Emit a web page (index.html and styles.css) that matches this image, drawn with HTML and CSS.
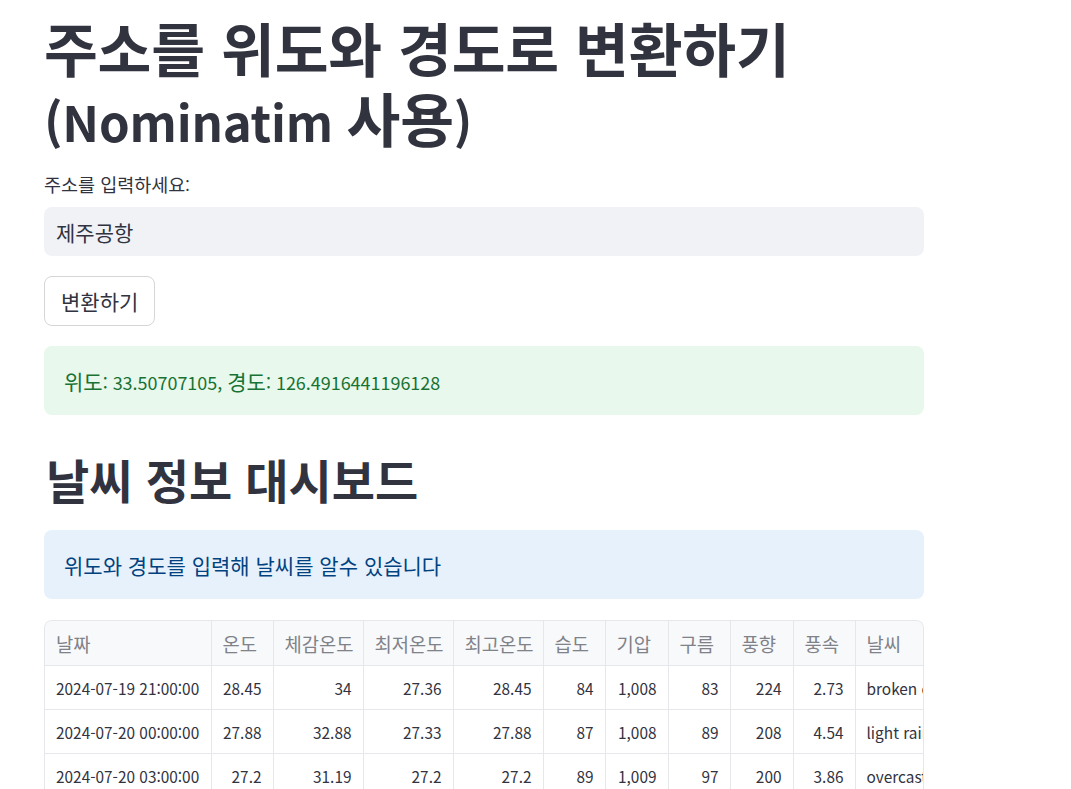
FILE: index.html
```html
<!DOCTYPE html>
<html lang="ko">
<head>
<meta charset="utf-8">
<title>주소를 위도와 경도로 변환하기</title>
<link rel="stylesheet" href="styles.css">
</head>
<body>
<main class="main">
  <h1 class="title">주소를 위도와 경도로 변환하기 <span class="lat">(Nominatim </span>사용<span class="lat">)</span></h1>
  <div class="field">
    <label class="field-label" for="addr">주소를 입력하세요<span class="lat">:</span></label>
    <input class="field-input" id="addr" type="text" value="제주공항">
  </div>
  <div><button class="btn" type="button">변환하기</button></div>
  <div class="alert alert-success"><p>위도<span class="lat">: 33.50707105, </span>경도<span class="lat">: 126.4916441196128</span></p></div>
  <h2 class="subtitle">날씨 정보 대시보드</h2>
  <div class="alert alert-info"><p>위도와 경도를 입력해 날씨를 알수 있습니다</p></div>
  <div class="grid-wrap">
    <table class="grid">
      <colgroup>
        <col class="c-date"><col class="c-s"><col class="c-m"><col class="c-m"><col class="c-m"><col class="c-s"><col class="c-s1"><col class="c-s"><col class="c-s1"><col class="c-s"><col class="c-w">
      </colgroup>
      <thead>
        <tr><th>날짜</th><th>온도</th><th>체감온도</th><th>최저온도</th><th>최고온도</th><th>습도</th><th>기압</th><th>구름</th><th>풍향</th><th>풍속</th><th>날씨</th></tr>
      </thead>
      <tbody>
        <tr><td class="t">2024-07-19 21:00:00</td><td>28.45</td><td>34</td><td>27.36</td><td>28.45</td><td>84</td><td>1,008</td><td>83</td><td>224</td><td>2.73</td><td class="t">broken clouds</td></tr>
        <tr><td class="t">2024-07-20 00:00:00</td><td>27.88</td><td>32.88</td><td>27.33</td><td>27.88</td><td>87</td><td>1,008</td><td>89</td><td>208</td><td>4.54</td><td class="t">light rain</td></tr>
        <tr><td class="t">2024-07-20 03:00:00</td><td>27.2</td><td>31.19</td><td>27.2</td><td>27.2</td><td>89</td><td>1,009</td><td>97</td><td>200</td><td>3.86</td><td class="t">overcast clouds</td></tr>
      </tbody>
    </table>
  </div>
</main>
</body>
</html>
```
FILE: styles.css
```css
html, body {
  margin: 0;
  padding: 0;
  background: #ffffff;
}
body {
  font-family: "Noto Sans CJK KR", "Noto Sans", sans-serif;
  color: #31333f;
  overflow: hidden;
}
.lat {
  font-size: 0.86em;
}
.main {
  width: 880px;
  margin-left: 44px;
  display: flex;
  flex-direction: column;
  gap: 20px;
}
.title {
  margin: 12px 0 0 0;
  font-size: 58.5px;
  font-weight: 700;
  line-height: 70px;
  letter-spacing: -0.2px;
  color: #31333f;
}
.title .lat {
  font-size: 0.84em;
}
.field {
  display: flex;
  flex-direction: column;
  gap: 8px;
  margin-top: -5px;
}
.field-label {
  font-size: 18.5px;
  line-height: 26px;
}
.field-input {
  box-sizing: border-box;
  height: 49px;
  width: 100%;
  border: none;
  border-radius: 8px;
  background: #f0f2f6;
  padding: 0 12px;
  font-family: inherit;
  font-size: 21px;
  color: #31333f;
  outline: none;
}
.btn {
  box-sizing: border-box;
  height: 50px;
  padding: 0 16px;
  border: 1px solid #d6d6d9;
  border-radius: 8px;
  background: #ffffff;
  font-family: inherit;
  font-size: 21px;
  color: #31333f;
}
.alert {
  box-sizing: border-box;
  height: 69px;
  border-radius: 8px;
  padding: 0 20px;
  display: flex;
  align-items: center;
  font-size: 21px;
}
.alert p {
  margin: 0;
}
.alert .lat {
  font-size: 0.855em;
}
.alert-success {
  background: #e8f8ec;
  color: #177233;
}
.alert-info {
  background: #e7f1fb;
  color: #004280;
}
.subtitle {
  margin: 16px 0 3px 2px;
  font-size: 47px;
  font-weight: 700;
  line-height: 56px;
  color: #31333f;
}
.grid-wrap {
  box-sizing: border-box;
  width: 880px;
  overflow: hidden;
  border: 1px solid #e6e7ea;
  border-bottom: none;
  border-radius: 8px 8px 0 0;
  margin-top: 1px;
}
.grid {
  border-collapse: collapse;
  table-layout: fixed;
  width: 960px;
  font-size: 15.4px;
}
.c-date { width: 166px; }
.c-s { width: 62px; }
.c-s1 { width: 63px; }
.c-m { width: 90px; }
.c-w { width: 150px; }
.grid th {
  height: 44px;
  background: #f8f9fb;
  color: #808289;
  font-size: 18.8px;
  font-weight: 400;
  text-align: left;
  padding: 0 11px;
  border-right: 1px solid #e6e7ea;
  border-bottom: 1px solid #e6e7ea;
  white-space: nowrap;
}
.grid td {
  height: 43px;
  padding: 0 11px;
  text-align: right;
  border-right: 1px solid #e6e7ea;
  border-bottom: 1px solid #e6e7ea;
  white-space: nowrap;
  overflow: hidden;
}
.grid td.t {
  text-align: left;
}
```
